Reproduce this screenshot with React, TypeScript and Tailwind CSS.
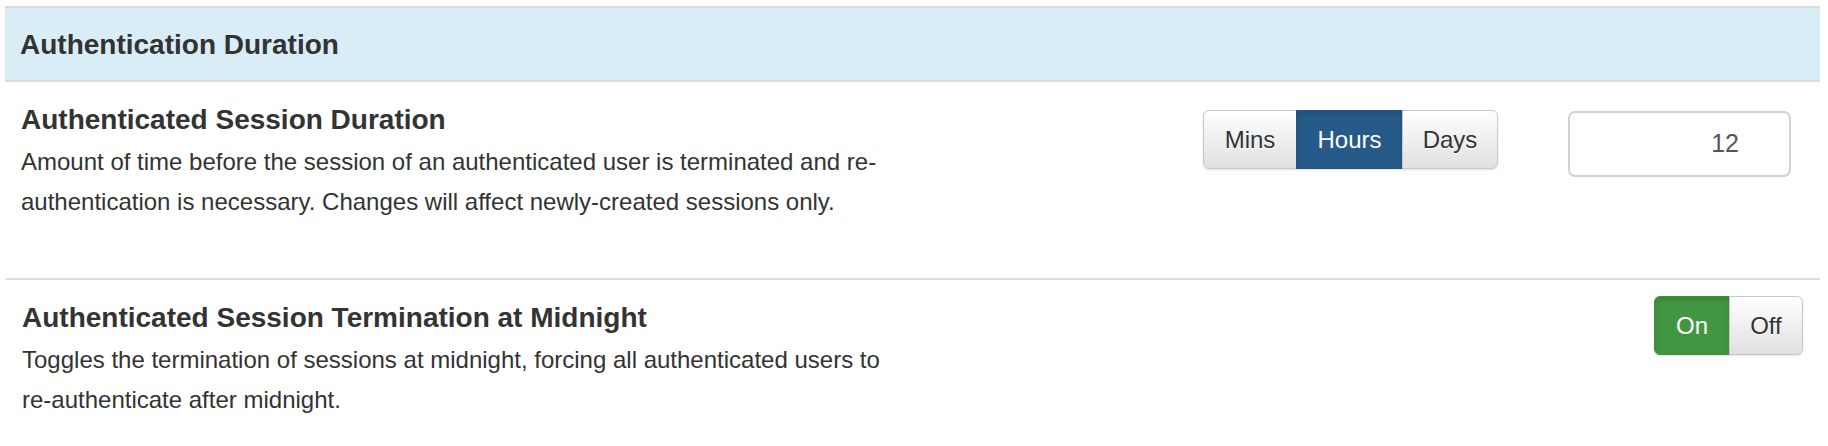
import React from "react";

const defaultBtn =
  "bg-[linear-gradient(to_bottom,#ffffff_0%,#e0e0e0_100%)] border border-[#c8c8c8] text-[#333] [text-shadow:0_1px_0_#fff]";

export default function App() {
  return (
    <div className="w-[1828px] h-[446px] bg-white font-['Liberation_Sans',Arial,Helvetica,sans-serif] text-[#333]">
      <div className="pt-[6px] pl-[5px] w-[1820px]">
        <div className="bg-[#d9edf7] border-y-2 border-[#dcdcdc] px-[15px] pt-[17px] pb-[15px]">
          <h3 className="text-[28px] font-bold leading-[40px]">Authentication Duration</h3>
        </div>

        <div className="flex h-[196px] pt-[16px] pl-[16px] pr-[29px]">
          <div className="w-[880px] pt-[2px]">
            <h4 className="text-[28px] font-bold leading-[40px]">Authenticated Session Duration</h4>
            <p className="text-[24px] leading-[40px] mt-[2px]">
              Amount of time before the session of an authenticated user is terminated and re-authentication is
              necessary. Changes will affect newly-created sessions only.
            </p>
          </div>
          <div className="ml-auto flex items-start gap-[70px] pt-[12px]">
            <div className="flex rounded-[6px] shadow-[0_1px_2px_rgba(0,0,0,0.12)]">
              <button className={`${defaultBtn} h-[59px] w-[94px] text-[24px] rounded-l-[6px]`}>Mins</button>
              <button className="h-[59px] w-[107px] text-[24px] text-white bg-[#265a88] border border-[#245580] -ml-px shadow-[inset_0_3px_5px_rgba(0,0,0,0.125)]">
                Hours
              </button>
              <button className={`${defaultBtn} h-[59px] w-[96px] text-[24px] rounded-r-[6px] -ml-px`}>Days</button>
            </div>
            <div className="mt-[1px] w-[223px] h-[66px] border-2 border-[#d2d2d2] rounded-[7px] flex items-center justify-end pr-[50px] text-[25px] text-[#555] bg-white">
              12
            </div>
          </div>
        </div>

        <div className="flex border-t-2 border-[#dcdcdc] pt-[16px] pl-[16px] pr-[17px] ml-[1px]">
          <div className="w-[880px] pt-[2px]">
            <h4 className="text-[28px] font-bold leading-[40px]">Authenticated Session Termination at Midnight</h4>
            <p className="text-[24px] leading-[40px] mt-[2px]">
              Toggles the termination of sessions at midnight, forcing all authenticated users to re-authenticate after
              midnight.
            </p>
          </div>
          <div className="ml-auto flex items-start">
            <div className="flex rounded-[6px] shadow-[0_1px_2px_rgba(0,0,0,0.12)]">
              <button className="h-[59px] w-[76px] text-[24px] text-white bg-[#419641] border border-[#3e8f3e] rounded-l-[6px] shadow-[inset_0_3px_5px_rgba(0,0,0,0.125)]">
                On
              </button>
              <button className={`${defaultBtn} h-[59px] w-[74px] text-[24px] rounded-r-[6px] -ml-px`}>Off</button>
            </div>
          </div>
        </div>
      </div>
    </div>
  );
}
